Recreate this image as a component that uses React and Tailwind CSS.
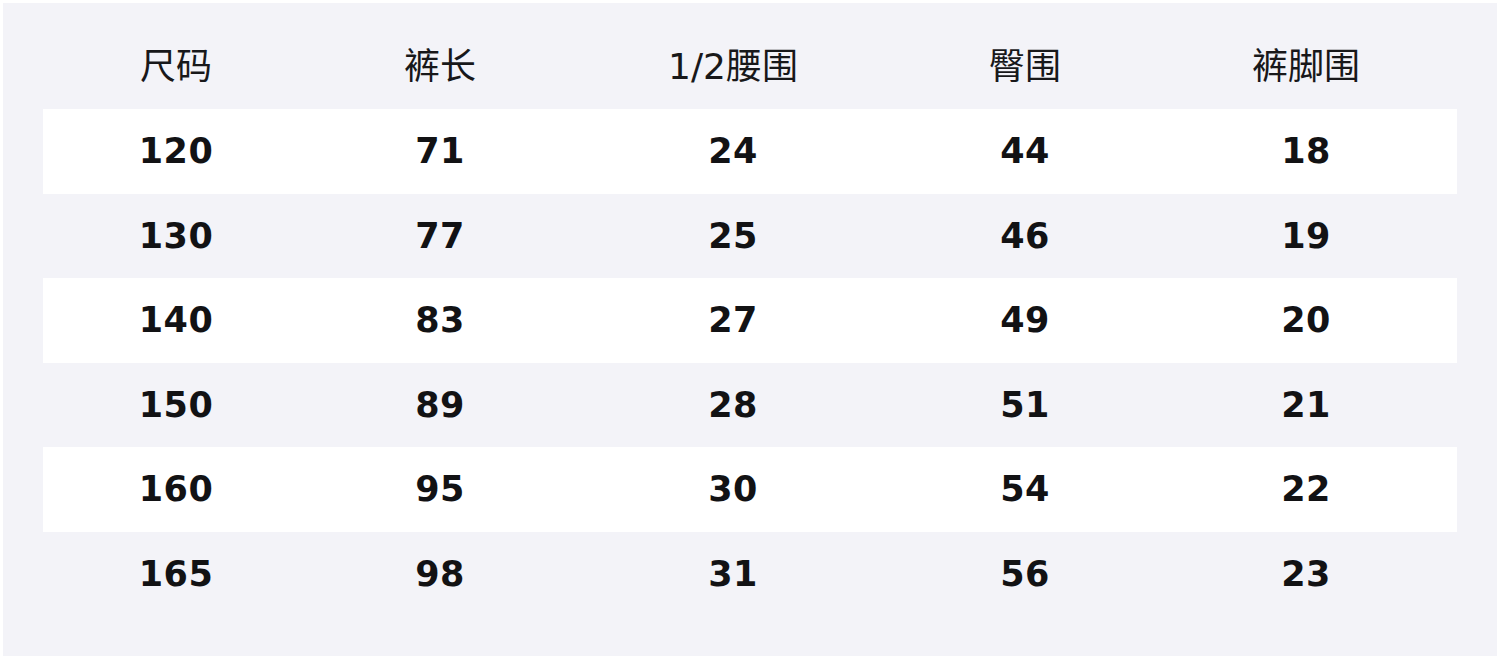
import React from 'react';

const HEAD = ['尺码', '裤长', '1/2腰围', '臀围', '裤脚围'];
const ROWS = [
  ['120', '71', '24', '44', '18'],
  ['130', '77', '25', '46', '19'],
  ['140', '83', '27', '49', '20'],
  ['150', '89', '28', '51', '21'],
  ['160', '95', '30', '54', '22'],
  ['165', '98', '31', '56', '23'],
];

const cols = 'grid grid-cols-[266px_262px_324px_260px_302px]';

export default function App() {
  return (
    <div className="w-[1500px] h-[659px] bg-white p-[3px] font-['DejaVu_Sans','Noto_Sans_CJK_SC',sans-serif]">
      <div className="h-full bg-[#f3f3f8] px-[40px] pt-[21px]">
        <div className={`${cols} h-[85px] items-center text-center text-[36px] text-[#18181a]`}>
          {HEAD.map((h) => <div key={h}>{h}</div>)}
        </div>
        {ROWS.map((r, i) => (
          <div key={r[0]} className={`${cols} h-[84.5px] items-center text-center text-[35px] tracking-[0.5px] font-bold text-[#121214] ${i % 2 === 0 ? 'bg-white' : ''}`}>
            {r.map((v, j) => <div key={j}>{v}</div>)}
          </div>
        ))}
      </div>
    </div>
  );
}
